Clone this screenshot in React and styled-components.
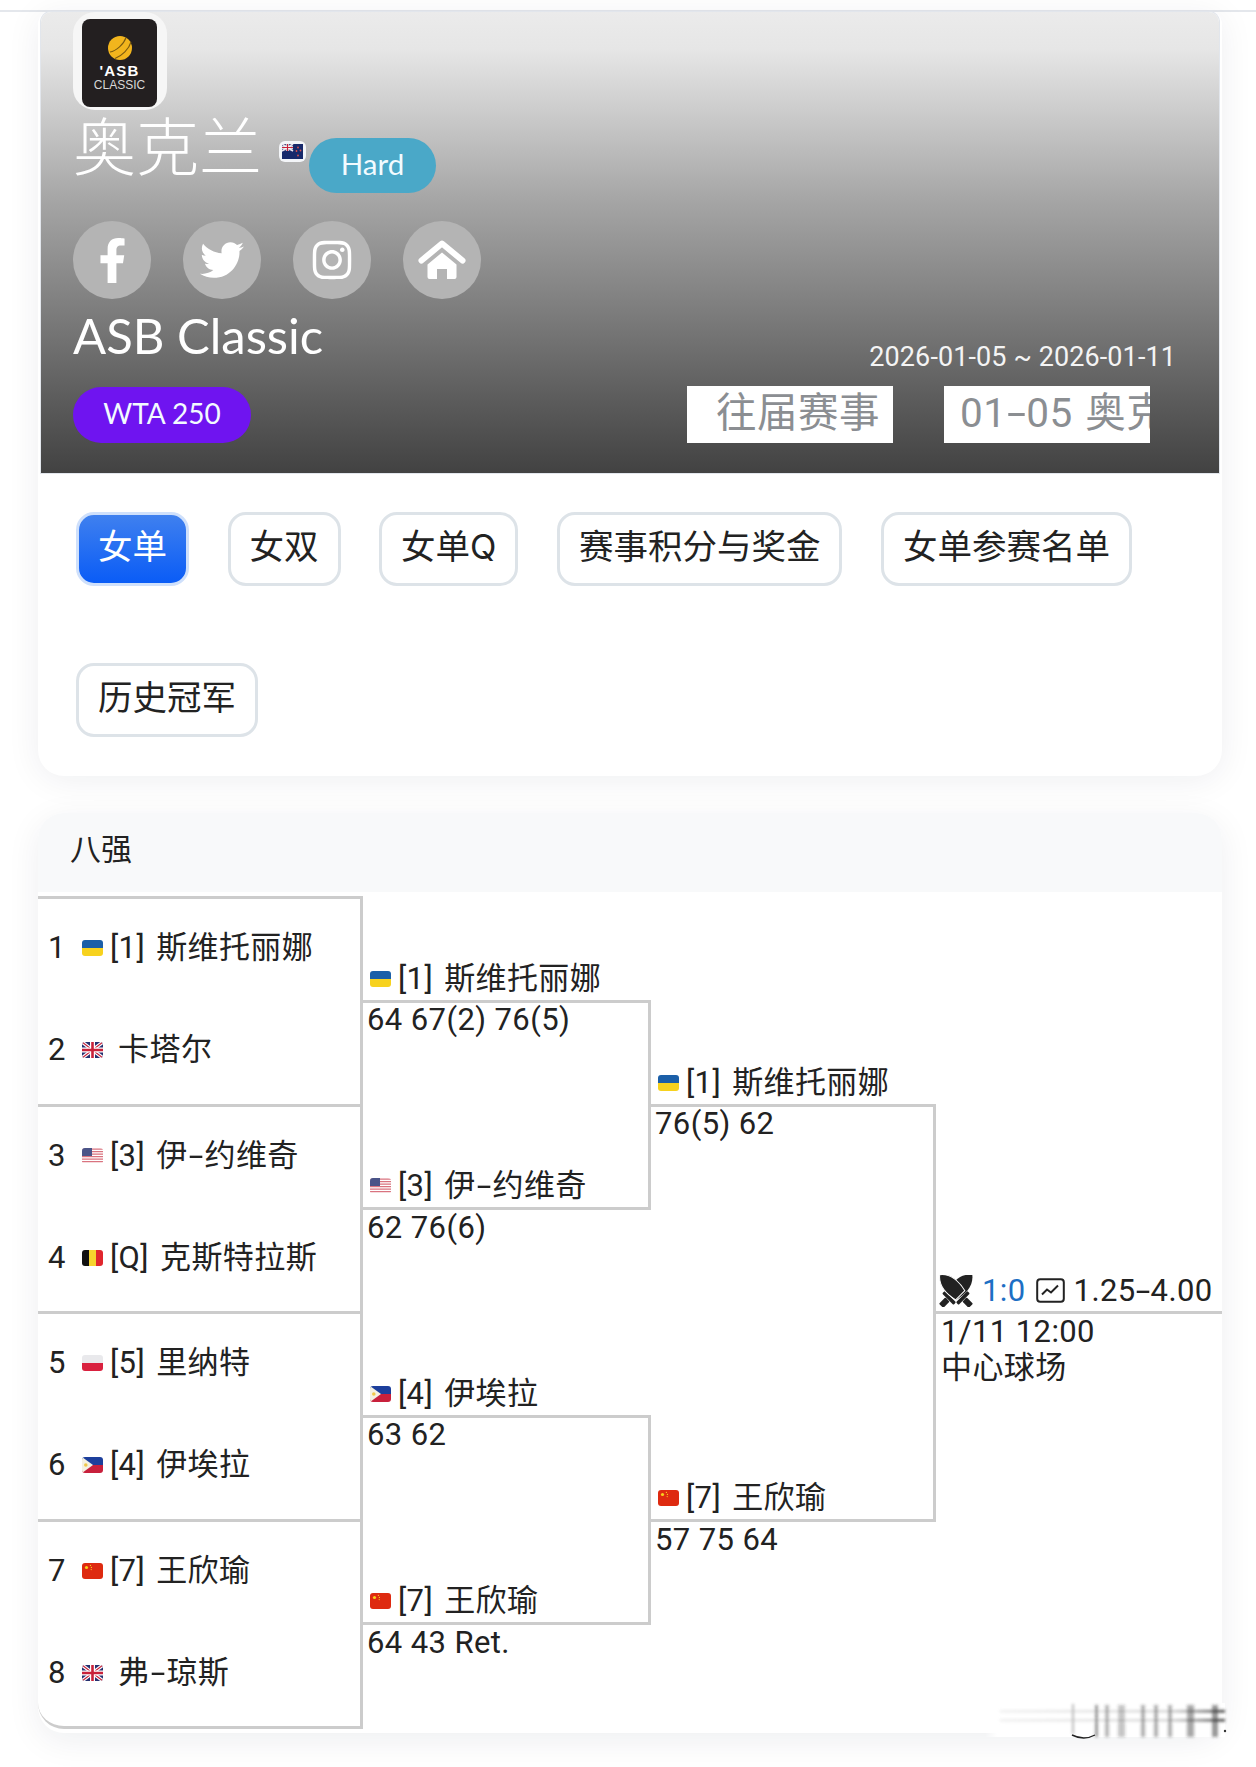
import React from "react";
import styled, { createGlobalStyle } from "styled-components";
import { FaFacebookF, FaTwitter, FaInstagram } from "react-icons/fa";

const GlobalStyle = createGlobalStyle`
  html, body {
    margin: 0;
    padding: 0;
    background: #ffffff;
  }
  body {
    font-family: Roboto, "Noto Sans CJK SC", sans-serif;
    color: #222222;
  }
  * {
    box-sizing: border-box;
  }
`;

const flagFrames = {
  ua: (
    <>
      <rect width="21" height="8" fill="#1b5fa8" />
      <rect y="8" width="21" height="8" fill="#f7d21e" />
    </>
  ),
  gb: (
    <>
      <rect width="21" height="16" fill="#26306f" />
      <path d="M0 0 21 16M21 0 0 16" stroke="#fff" strokeWidth="3.4" />
      <path d="M0 0 21 16M21 0 0 16" stroke="#c8213a" strokeWidth="1.2" />
      <path d="M10.5 0v16M0 8h21" stroke="#fff" strokeWidth="5" />
      <path d="M10.5 0v16M0 8h21" stroke="#c8213a" strokeWidth="2.6" />
    </>
  ),
  us: (
    <>
      <rect width="21" height="16" fill="#fff" />
      <path d="M0 1.2h21M0 3.7h21M0 6.2h21M0 8.7h21M0 11.2h21M0 13.7h21" stroke="#d9737f" strokeWidth="1.2" />
      <rect width="10" height="8" fill="#4a5488" />
    </>
  ),
  be: (
    <>
      <rect width="7" height="16" fill="#111" />
      <rect x="7" width="7" height="16" fill="#f6d32d" />
      <rect x="14" width="7" height="16" fill="#e0262d" />
    </>
  ),
  pl: (
    <>
      <rect width="21" height="8" fill="#e9e9ec" />
      <rect y="8" width="21" height="8" fill="#d9213f" />
    </>
  ),
  ph: (
    <>
      <rect width="21" height="8" fill="#1c3f9c" />
      <rect y="8" width="21" height="8" fill="#c8203c" />
      <path d="M0 0 11 8 0 16Z" fill="#f4f1e2" />
      <circle cx="3.8" cy="8" r="1.8" fill="#efc84a" />
    </>
  ),
  cn: (
    <>
      <rect width="21" height="16" fill="#de2a10" />
      <circle cx="4.5" cy="4.5" r="1.6" fill="#f7d21e" />
      <circle cx="8.4" cy="2.4" r=".6" fill="#f7d21e" />
      <circle cx="9.4" cy="4.4" r=".6" fill="#f7d21e" />
      <circle cx="9.2" cy="6.6" r=".6" fill="#f7d21e" />
    </>
  ),
};

function Flag({ code }) {
  return (
    <FlagShape viewBox="0 0 21 16" aria-hidden="true">
      {flagFrames[code]}
    </FlagShape>
  );
}

function NzFlag() {
  return (
    <NzFrame>
      <svg width="21" height="15" viewBox="0 0 21 15" aria-hidden="true">
        <rect width="21" height="15" fill="#17296b" />
        <rect width="11" height="7" fill="#4a4f80" />
        <path d="M0 0 11 7M11 0 0 7" stroke="#e8e4ee" strokeWidth="1.6" />
        <path d="M5.5 0v7M0 3.5h11" stroke="#fff" strokeWidth="2.4" />
        <path d="M5.5 0v7M0 3.5h11" stroke="#c8213a" strokeWidth="1.2" />
        <circle cx="16" cy="3.5" r=".9" fill="#d9534f" />
        <circle cx="18.5" cy="6.5" r=".9" fill="#d9534f" />
        <circle cx="14.5" cy="7" r=".9" fill="#d9534f" />
        <circle cx="16" cy="11.5" r=".9" fill="#d9534f" />
      </svg>
    </NzFrame>
  );
}

function HomeIcon() {
  return (
    <svg width="48" height="40" viewBox="0 0 48 40" fill="#fff" aria-hidden="true">
      <path d="M3.5 20.5 24 3.5 44.5 20.5" fill="none" stroke="#fff" strokeWidth="6" strokeLinecap="round" strokeLinejoin="round" />
      <path d="M9.5 24.5 24 12.5 38.5 24.5V37a2 2 0 0 1-2 2H29V29H19V39H11.5a2 2 0 0 1-2-2Z" />
    </svg>
  );
}

function Sword({ angle, outline }) {
  return (
    <g transform={`translate(17 16) rotate(${angle})`}>
      <path
        d="M0 -23C9 -16 9 -5 6.5 6H-6.5C-9 -5 -9 -16 0 -23Z"
        fill="#222"
        stroke={outline ? "#fff" : "none"}
        strokeWidth="1"
      />
      <rect x="-8" y="8" width="16" height="3.6" rx="1" fill="#222" />
      <rect x="-3" y="12" width="6" height="9" rx="1" fill="#222" />
    </g>
  );
}

function SwordsIcon() {
  return (
    <svg width="34" height="32" viewBox="0 0 34 32" aria-hidden="true">
      <Sword angle={45} />
      <Sword angle={-45} outline />
    </svg>
  );
}

function ChartIcon() {
  return (
    <svg width="29" height="25" viewBox="0 0 29 25" fill="none" aria-hidden="true">
      <rect x="1.2" y="1.2" width="26.6" height="22.6" rx="3" stroke="#222" strokeWidth="2" />
      <path d="M6 16.5 11 11.5 15 14.5 22 7.5" stroke="#222" strokeWidth="2" />
    </svg>
  );
}

function Smudge() {
  const bars = [
    [1095, 3, 0.5],
    [1105, 4, 0.35],
    [1118, 7, 0.28],
    [1141, 4, 0.38],
    [1154, 4, 0.38],
    [1168, 4, 0.38],
    [1187, 7, 0.42],
    [1212, 6, 0.5],
  ];
  return (
    <SmudgeLayer width="250" height="48" viewBox="980 1696 250 48" aria-hidden="true">
      <defs>
        <filter id="soft" x="-5%" y="-30%" width="110%" height="160%">
          <feGaussianBlur stdDeviation="1.5" />
        </filter>
        <linearGradient id="veil" x1="0" x2="1" y1="0" y2="0">
          <stop offset="0" stopColor="#fff" stopOpacity="0" />
          <stop offset=".05" stopColor="#fff" />
          <stop offset="1" stopColor="#fff" />
        </linearGradient>
        <linearGradient id="streak" x1="0" x2="1" y1="0" y2="0">
          <stop offset="0" stopColor="#ccc" stopOpacity=".3" />
          <stop offset=".75" stopColor="#bbb" stopOpacity=".6" />
          <stop offset="1" stopColor="#333" />
        </linearGradient>
      </defs>
      <rect x="985" y="1703" width="240" height="34" fill="url(#veil)" />
      <g filter="url(#soft)">
        <rect x="1000" y="1710" width="225" height="2.5" fill="url(#streak)" />
        <rect x="1000" y="1719" width="225" height="2.5" fill="url(#streak)" />
        <rect x="1072" y="1704" width="2" height="30" fill="#bbb" />
        {bars.map(([x, w, o]) => (
          <rect key={x} x={x} y="1705" width={w} height="32" fill="#333" opacity={o} />
        ))}
      </g>
      <path d="M1072 1735Q1084 1741 1095 1735" stroke="#222" strokeWidth="1.4" fill="none" />
      <circle cx="1225" cy="1731" r="1.2" fill="#333" />
    </SmudgeLayer>
  );
}

// the hyphen in the reference is drawn much longer than Roboto's
function dashed(text) {
  const parts = text.split("-");
  return parts.map((part, i) => (
    <React.Fragment key={i}>
      {i > 0 && <Dash>-</Dash>}
      {part}
    </React.Fragment>
  ));
}

const players = [
  { seed: "1", flag: "ua", name: "[1] 斯维托丽娜" },
  { seed: "2", flag: "gb", name: " 卡塔尔", unseeded: true },
  { seed: "3", flag: "us", name: "[3] 伊-约维奇" },
  { seed: "4", flag: "be", name: "[Q] 克斯特拉斯" },
  { seed: "5", flag: "pl", name: "[5] 里纳特" },
  { seed: "6", flag: "ph", name: "[4] 伊埃拉" },
  { seed: "7", flag: "cn", name: "[7] 王欣瑜" },
  { seed: "8", flag: "gb", name: " 弗-琼斯", unseeded: true },
];

const pairings = [
  {
    col: 2, start: 1, size: 1,
    top: { flag: "ua", name: "[1] 斯维托丽娜", score: "64 67(2) 76(5)" },
    bottom: { flag: "us", name: "[3] 伊-约维奇", score: "62 76(6)" },
  },
  {
    col: 2, start: 5, size: 1,
    top: { flag: "ph", name: "[4] 伊埃拉", score: "63 62" },
    bottom: { flag: "cn", name: "[7] 王欣瑜", score: "64 43 Ret." },
  },
  {
    col: 3, start: 1, size: 2,
    top: { flag: "ua", name: "[1] 斯维托丽娜", score: "76(5) 62" },
    bottom: { flag: "cn", name: "[7] 王欣瑜", score: "57 75 64" },
  },
];

const tabs = ["女单", "女双", "女单Q", "赛事积分与奖金", "女单参赛名单", "历史冠军"];

export default function App() {
  const matches = [0, 2, 4, 6].map((i) => players.slice(i, i + 2));

  return (
    <Page>
      <GlobalStyle />
      <TopBar />
      <HeroCard>
        <Hero>
          <LogoFrame>
            <Logo>
              <svg width="26" height="26" viewBox="0 0 26 26" aria-hidden="true">
                <circle cx="13" cy="13" r="12" fill="#f2b51d" />
                <path d="M3 17C9 16 17 9 19 2.5M8 23.5C15 21 22 14 24 7" stroke="#7a5a10" strokeWidth="1.1" fill="none" />
              </svg>
              <LogoMark>'ASB</LogoMark>
              <LogoSub>CLASSIC</LogoSub>
            </Logo>
          </LogoFrame>
          <TitleRow>
            <City>奥克兰</City>
            <NzFlag />
            <Pill $bg="#4aa8c8">Hard</Pill>
          </TitleRow>
          <Socials>
            <Social><FaFacebookF size={45} /></Social>
            <Social><FaTwitter size={44} /></Social>
            <Social><FaInstagram size={44} /></Social>
            <Social><HomeIcon /></Social>
          </Socials>
          <LowerRow>
            <div>
              <Tournament>ASB Classic</Tournament>
              <LevelPill $bg="#6f14f0">WTA 250</LevelPill>
            </div>
            <RightSide>
              <Dates>2026-01-05 ~ 2026-01-11</Dates>
              <Selects>
                <FakeSelect $inset={29}>往届赛事</FakeSelect>
                <FakeSelect $inset={16}>{dashed("01-05 奥克兰")}</FakeSelect>
              </Selects>
            </RightSide>
          </LowerRow>
        </Hero>
        <Tabs>
          {tabs.map((tab, i) => (
            <Tab key={tab} $active={i === 0}>{tab}</Tab>
          ))}
        </Tabs>
      </HeroCard>

      <DrawCard>
        <DrawHeader>八强</DrawHeader>
        <Bracket>
          {matches.map((pair, i) => (
            <Match key={i} $row={i * 2 + 1}>
              {pair.map((p) => (
                <Player key={p.seed}>
                  <Seed>{p.seed}</Seed>
                  <Flag code={p.flag} />
                  <PlayerName $unseeded={p.unseeded}>{dashed(p.name)}</PlayerName>
                </Player>
              ))}
            </Match>
          ))}

          {pairings.map(({ col, start, size, top, bottom }) => (
            <React.Fragment key={`${col}-${start}`}>
              <Advance $col={col} $rows={`${start} / span ${size}`}>
                <Flag code={top.flag} />
                <span>{dashed(top.name)}</span>
              </Advance>
              <Connector $col={col} $rows={`${start + size} / span ${size * 2}`}>
                <Score>{top.score}</Score>
                <InnerName>
                  <Flag code={bottom.flag} />
                  <span>{dashed(bottom.name)}</span>
                </InnerName>
              </Connector>
              <ScoreCell $col={col} $rows={`${start + size * 3} / span ${size}`}>
                {bottom.score}
              </ScoreCell>
            </React.Fragment>
          ))}

          <FinalHead>
            <SwordsIcon />
            <H2H>1:0</H2H>
            <ChartIcon />
            <Odds>{dashed("1.25-4.00")}</Odds>
          </FinalHead>
          <FinalInfo>
            <div>1/11 12:00</div>
            <div>中心球场</div>
          </FinalInfo>
        </Bracket>
      </DrawCard>
      <Smudge />
    </Page>
  );
}

const Page = styled.div`
  position: relative;
  width: 1256px;
  height: 1767px;
  overflow: hidden;
  background: #ffffff;
`;
const TopBar = styled.div`
  height: 12px;
  background: #ffffff;
  border-bottom: 2px solid #e4e7ec;
`;
const HeroCard = styled.section`
  width: 1184px;
  margin-left: 38px;
  padding: 0 3px;
  background: #ffffff;
  border-radius: 12px 12px 26px 26px;
  box-shadow: 0 4px 34px rgba(20, 30, 50, 0.07);
`;
const Hero = styled.div`
  height: 461px;
  padding-left: 32px;
  border-radius: 10px 10px 0 0;
  background: linear-gradient(
    180deg,
    #ebebeb 0%,
    #e6e6e6 8%,
    #cbcbcb 22%,
    #a5a5a5 41%,
    #808080 63%,
    #5c5c5c 84%,
    #424242 100%
  );
  box-shadow: 0 0 0 1px #e2e6ec;
`;
const LogoFrame = styled.div`
  width: 94px;
  height: 98px;
  padding: 7px 10px 3px 9px;
  border-radius: 22px;
  background: #f6f6f6;
`;
const Logo = styled.div`
  height: 88px;
  padding-top: 16px;
  border-radius: 8px;
  background: #231f20;
  display: flex;
  flex-direction: column;
  align-items: center;
`;
const LogoMark = styled.div`
  margin-top: 2px;
  font-family: "Liberation Sans", sans-serif;
  font-size: 15px;
  line-height: 15px;
  font-weight: 700;
  letter-spacing: 1.2px;
  color: #ffffff;
`;
const LogoSub = styled.div`
  font-family: "Liberation Sans", sans-serif;
  font-size: 12px;
  line-height: 14px;
  color: #d8d8d8;
`;
const TitleRow = styled.div`
  display: flex;
  align-items: flex-start;
  height: 83px;
`;
const City = styled.h1`
  margin: -3px 0 0;
  font-family: "Noto Sans CJK SC", sans-serif;
  font-size: 63px;
  line-height: 72px;
  font-weight: 300;
  color: #ffffff;
`;
const NzFrame = styled.span`
  display: flex;
  margin: 31px 0 0 17px;
  padding: 3px;
  border-radius: 6px;
  background: #f3f5f8;
`;
const Pill = styled.span`
  display: flex;
  align-items: center;
  justify-content: center;
  width: 127px;
  height: 55px;
  padding-bottom: 5px;
  margin: 28px 0 0 3px;
  border-radius: 28px;
  background: ${(p) => p.$bg};
  font-family: Lato, sans-serif;
  font-size: 29.5px;
  color: #f2fbff;
`;
const LevelPill = styled(Pill)`
  width: 178px;
  height: 56px;
  margin: 0;
  font-size: 28px;
`;
const Socials = styled.div`
  display: flex;
  gap: 32px;
  margin-top: 28px;
`;
const Social = styled.span`
  width: 78px;
  height: 78px;
  border-radius: 50%;
  background: #b4b4b4;
  color: #ffffff;
  display: flex;
  align-items: center;
  justify-content: center;
`;
const LowerRow = styled.div`
  display: flex;
  justify-content: space-between;
  align-items: flex-end;
  padding-right: 43px;
`;
const Tournament = styled.div`
  margin: 6px 0 22px;
  font-family: Lato, sans-serif;
  font-size: 49px;
  line-height: 60px;
  color: #ffffff;
`;
const RightSide = styled.div`
  display: flex;
  flex-direction: column;
  align-items: flex-end;
  gap: 16px;
`;
const Dates = styled.div`
  font-size: 27px;
  line-height: 26px;
  letter-spacing: 0.1px;
  color: #f4f4f4;
`;
const Selects = styled.div`
  display: flex;
  gap: 51px;
  margin-right: 26px;
`;
const FakeSelect = styled.div`
  width: 206px;
  height: 57px;
  padding-left: ${(p) => p.$inset}px;
  overflow: hidden;
  white-space: nowrap;
  background: #ffffff;
  color: #8b8e92;
  font-size: 40.5px;
  line-height: 55px;
  word-spacing: 2px;
  letter-spacing: 0.5px;
`;
const Tabs = styled.nav`
  display: flex;
  flex-wrap: wrap;
  gap: 77px 38.5px;
  padding: 39px 0 39px 35px;
`;
const Tab = styled.button`
  height: 74px;
  padding: 0 19px 4px;
  border: 3px solid ${(p) => (p.$active ? "#cfe0fb" : "#dde3e8")};
  border-radius: 18px;
  background: ${(p) => (p.$active ? "linear-gradient(180deg, #3f80ef 0%, #0a5cf6 100%)" : "#ffffff")};
  color: ${(p) => (p.$active ? "#ffffff" : "#222222")};
  font-family: Inter, "Noto Sans CJK SC", sans-serif;
  font-size: 34.5px;
  line-height: 60px;
`;
const DrawCard = styled.section`
  width: 1184px;
  height: 920px;
  margin: 37px 0 0 38px;
  border-radius: 26px;
  background: #ffffff;
  box-shadow: 0 8px 34px rgba(20, 30, 50, 0.07);
  overflow: hidden;
`;
const DrawHeader = styled.header`
  height: 79px;
  padding-left: 32px;
  background: #f8f9fa;
  font-size: 31px;
  line-height: 74px;
  color: #222222;
`;
const Bracket = styled.div`
  display: grid;
  grid-template-columns: 325px 288px 285px 286px;
  grid-template-rows: repeat(8, 103.75px);
  margin-top: 7px;
  font-size: 31px;
  line-height: 36px;
  letter-spacing: 0.4px;
  color: #222222;
`;
const Match = styled.div`
  grid-column: 1;
  grid-row: ${(p) => p.$row} / span 2;
  display: flex;
  flex-direction: column;
  border-right: 3px solid #cccccc;
  border-bottom: 3px solid #cccccc;

  &:first-child {
    box-shadow: 0 -3px 0 #cccccc;
  }
  &:nth-child(4) {
    border-bottom-left-radius: 26px;
  }
`;
const Player = styled.div`
  flex: 1;
  display: flex;
  align-items: center;
  padding: 0 0 4px 10px;
`;
const Seed = styled.span`
  width: 34px;
`;
const PlayerName = styled.span`
  margin-left: 7px;
  white-space: pre;
  word-spacing: ${(p) => (p.$unseeded ? 0 : 3)}px;
`;
const Dash = styled.span`
  display: inline-block;
  margin: 0 4px;
  transform: scaleX(1.7);
`;
const FlagShape = styled.svg`
  width: 21px;
  height: 16px;
  flex: none;
  border-radius: 3px;
`;
const Cell = styled.div`
  grid-column: ${(p) => p.$col};
  grid-row: ${(p) => p.$rows};
`;
const Advance = styled(Cell)`
  display: flex;
  align-items: flex-end;
  border-bottom: 3px solid #cccccc;
  padding: 0 0 3px 7px;
  word-spacing: 3px;

  & > svg {
    margin: 0 7px 10px 0;
  }
`;
const Connector = styled(Cell)`
  display: flex;
  flex-direction: column;
  justify-content: space-between;
  border-right: 3px solid #cccccc;
  border-bottom: 3px solid #cccccc;
`;
const Score = styled.div`
  padding-left: 4px;
  margin-top: -1px;
`;
const ScoreCell = styled(Cell)`
  padding-left: 4px;
`;
const InnerName = styled.div`
  display: flex;
  align-items: flex-end;
  padding: 0 0 3px 7px;
  word-spacing: 3px;

  & > svg {
    margin: 0 7px 10px 0;
  }
`;
const FinalHead = styled.div`
  grid-column: 4;
  grid-row: 1 / span 4;
  display: flex;
  align-items: center;
  align-self: end;
  height: 42px;
  padding: 0 0 2px 3px;
  border-bottom: 3px solid #cccccc;

  & > svg:first-child {
    margin-right: 9px;
  }
`;
const H2H = styled.span`
  margin-right: 10px;
  color: #1d6fc4;
`;
const Odds = styled.span`
  margin-left: 9px;
  & > span {
    margin: 0 3px;
  }
`;
const FinalInfo = styled.div`
  grid-column: 4;
  grid-row: 5 / span 4;
  padding-left: 5px;
`;
const SmudgeLayer = styled.svg`
  position: absolute;
  left: 980px;
  top: 1696px;
`;
